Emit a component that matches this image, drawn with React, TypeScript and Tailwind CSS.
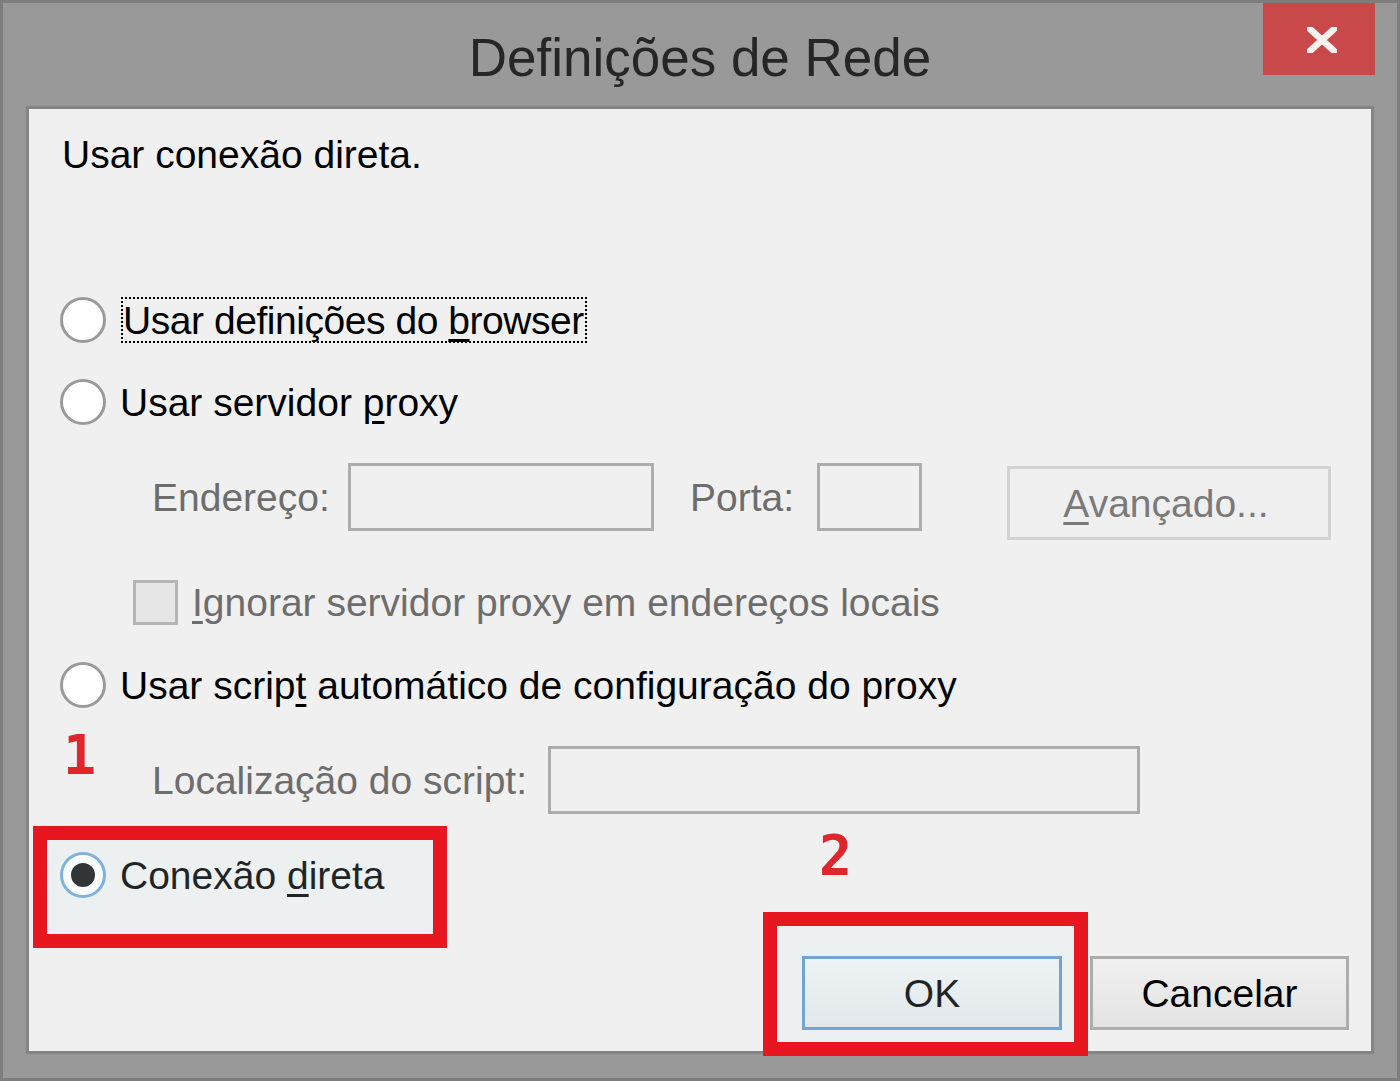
import React from "react";

const F = "font-['Liberation_Sans',Arial,sans-serif]";

function Radio({ checked }: { checked?: boolean }) {
  if (checked) {
    return (
      <span className="flex h-[46px] w-[46px] shrink-0 items-center justify-center rounded-full border-[3px] border-[#6ea6da] bg-white">
        <span className="h-[24px] w-[24px] rounded-full bg-[#161616]" />
      </span>
    );
  }
  return <span className="h-[46px] w-[46px] shrink-0 rounded-full border-[3px] border-[#9a9a9a] bg-white" />;
}

function U({ children }: { children: React.ReactNode }) {
  return <span className="underline decoration-[3px] underline-offset-[5px]">{children}</span>;
}

export default function App() {
  return (
    <div className={`${F} relative h-[1081px] w-[1400px] overflow-hidden border-[3px] border-[#7d7d7d] bg-[#999999] text-black`}>
      {/* Title bar */}
      <div className="relative flex h-[103px] items-center justify-center pt-[5px]">
        <span className="text-[53px] leading-none text-[#262626]">Definições de Rede</span>
        <div className="absolute right-[22px] top-[-3px] flex h-[75px] w-[112px] items-center justify-center bg-[#c9484a] pl-[5px] pt-[5px]">
          <svg width="30" height="26" viewBox="0 0 30 26">
            <path d="M3 2 L27 24 M27 2 L3 24" stroke="#f6f3ee" strokeWidth="6.5" strokeLinecap="square" />
          </svg>
        </div>
      </div>

      {/* Content panel */}
      <div className="relative mx-[23px] h-[948px] border-[3px] border-[#858585] bg-[#f0f0f0] text-[39px] leading-none">
        <div className="flex flex-col">
          <div className="mt-[25px] flex h-[40px] items-center pl-[33px]">Usar conexão direta.</div>

          <div className="mt-[123px] flex h-[46px] items-center pl-[31px]">
            <Radio />
            <span className="ml-[15px] flex h-[46px] items-center border-2 border-dotted border-black pr-[1px] tracking-[-0.45px]">
              <span>
                Usar definições do <U>b</U>rowser
              </span>
            </span>
          </div>

          <div className="mt-[36px] flex h-[46px] items-center pl-[31px]">
            <Radio />
            <span className="ml-[14px]">
              Usar servidor <U>p</U>roxy
            </span>
          </div>

          <div className="mt-[38px] flex h-[77px] items-start pl-[123px] text-[#6d6d6d]">
            <div className="flex h-[68px] w-[196px] items-center">Endereço:</div>
            <div className="h-[68px] w-[306px] border-[3px] border-[#adadad] bg-[#f0f0f0]" />
            <div className="flex h-[68px] w-[163px] items-center pl-[36px]">Porta:</div>
            <div className="h-[68px] w-[105px] border-[3px] border-[#adadad] bg-[#f0f0f0]" />
            <div className="ml-[85px] mt-[3px] flex h-[74px] w-[324px] items-center justify-center border-[3px] border-[#d3d3d3] bg-[#efefef] pr-[6px] text-[#7a7a7a]">
              <span>
                <U>A</U>vançado...
              </span>
            </div>
          </div>

          <div className="mt-[40px] flex h-[45px] items-center pl-[104px] text-[#6d6d6d]">
            <span className="h-[45px] w-[45px] shrink-0 border-[3px] border-[#b5b5b5] bg-[#e6e6e6]" />
            <span className="ml-[14px]">
              <U>I</U>gnorar servidor proxy em endereços locais
            </span>
          </div>

          <div className="mt-[37px] flex h-[46px] items-center pl-[31px]">
            <Radio />
            <span className="ml-[14px]">
              Usar scrip<U>t</U> automático de configuração do proxy
            </span>
          </div>

          <div className="mt-[38px] flex h-[68px] items-center pl-[123px] text-[#6d6d6d]">
            <div className="w-[396px]">Localização do script:</div>
            <div className="h-[68px] w-[592px] border-[3px] border-[#adadad] bg-[#f0f0f0]" />
          </div>

          <div className="mt-[38px] flex h-[46px] items-center pl-[31px]">
            <Radio checked />
            <span className="ml-[14px]">
              Conexão <U>d</U>ireta
            </span>
          </div>

          <div className="mt-[58px] flex h-[74px] justify-end gap-[28px] pr-[22px]">
            <div className="flex h-[74px] w-[260px] items-center justify-center border-[3px] border-[#5f97d1] bg-gradient-to-b from-[#f2f4f5] to-[#e4e6e8]">
              OK
            </div>
            <div className="flex h-[74px] w-[259px] items-center justify-center border-[3px] border-[#adadad] bg-gradient-to-b from-[#f0f0f0] to-[#e3e3e3]">
              Cancelar
            </div>
          </div>
        </div>

        {/* Annotations */}
        <span className="pointer-events-none absolute left-[34px] top-[619px] font-['DejaVu_Sans_Mono',monospace] text-[55px] font-bold leading-none text-[#e0262d]">
          1
        </span>
        <div className="pointer-events-none absolute left-[4px] top-[717px] h-[122px] w-[414px] border-[14px] border-[#e8161f] bg-[#d5f3fb]/15" />
        <span className="pointer-events-none absolute left-[790px] top-[719px] font-['DejaVu_Sans_Mono',monospace] text-[55px] font-bold leading-none text-[#e0262d]">
          2
        </span>
        <div className="pointer-events-none absolute left-[734px] top-[803px] h-[144px] w-[325px] border-[14px] border-[#e8161f] bg-[#d5f3fb]/15" />
      </div>
    </div>
  );
}
